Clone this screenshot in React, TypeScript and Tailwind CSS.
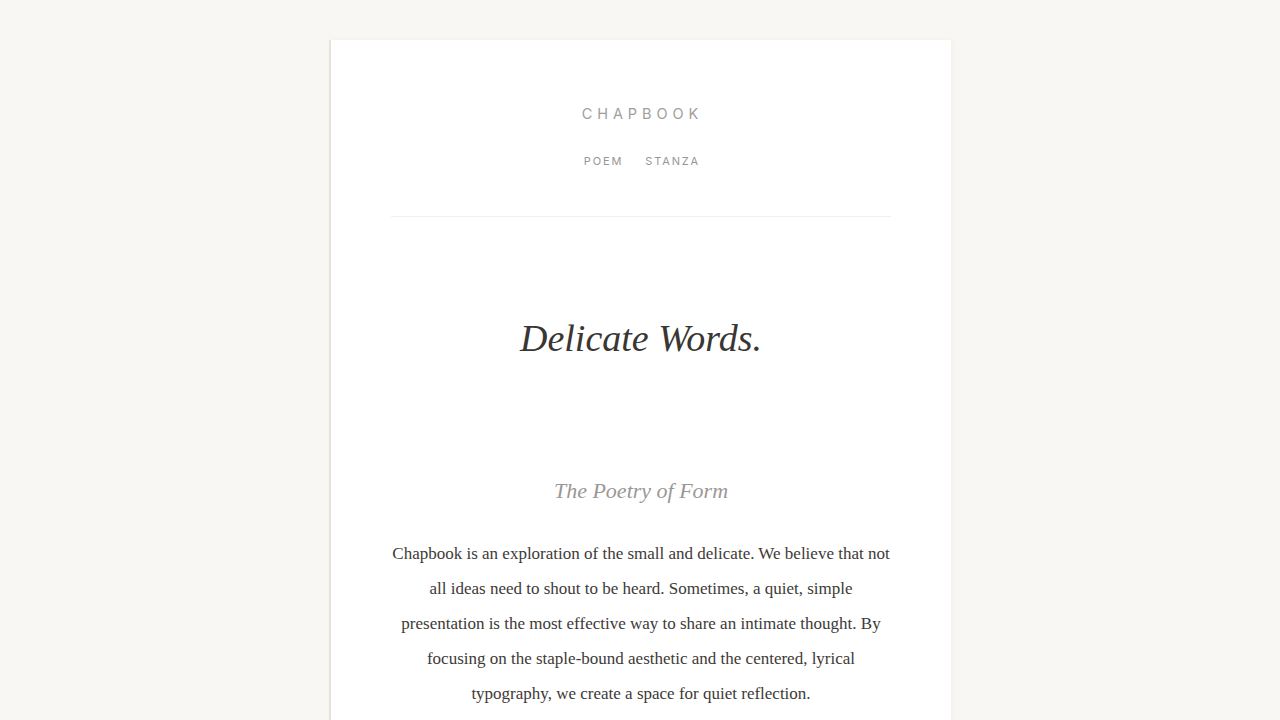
export default function App() {
  return (
    <div className="min-h-screen bg-[#f8f7f4] pt-10 flex justify-center">
      <div className="w-[622px] bg-white border-l-2 border-[#e6e3dc] shadow-[2px_0_6px_rgba(0,0,0,0.03)] px-[60px] min-h-[700px]">
        <header className="pt-[63px] pb-[47px] flex flex-col items-center">
          <div className="text-[14.5px] leading-[22px] tracking-[0.34em] pl-[0.2em] text-[#a39d9a] font-['Inter',sans-serif]">CHAPBOOK</div>
          <nav className="mt-[28px] flex gap-[22px] pl-[0.17em] text-[11px] leading-[16px] tracking-[0.17em] text-[#9a9592] font-['Inter',sans-serif]">
            <span>POEM</span>
            <span>STANZA</span>
          </nav>
        </header>
        <div className="h-px bg-[#efefef]"></div>
        <main className="font-['Liberation_Serif',serif] text-center">
          <h1 className="mt-[96px] italic text-[38px] leading-[50px] text-[#3a3633]">Delicate Words.</h1>
          <h2 className="mt-[111px] italic text-[22px] leading-[34px] text-[#9b9795]">The Poetry of Form</h2>
          <p className="mt-[28px] text-[17px] leading-[35px] text-[#3d3a37]">
            Chapbook is an exploration of the small and delicate. We believe that not all ideas need to shout to be heard. Sometimes, a quiet, simple presentation is the most effective way to share an intimate thought. By focusing on the staple-bound aesthetic and the centered, lyrical typography, we create a space for quiet reflection.
          </p>
        </main>
      </div>
    </div>
  );
}
